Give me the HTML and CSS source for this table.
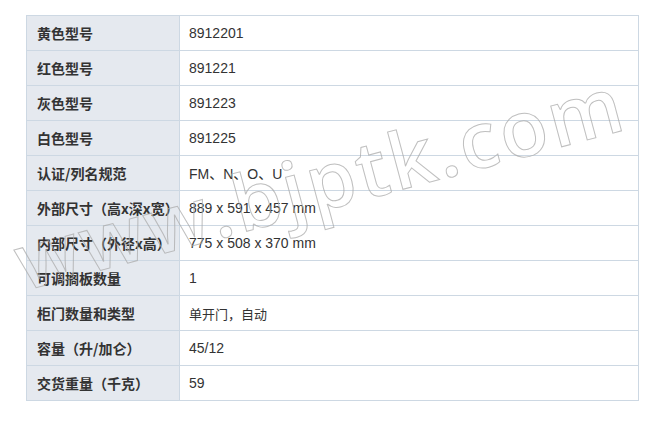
FILE: index.html
```html
<!DOCTYPE html>
<html lang="zh">
<head>
<meta charset="utf-8">
<link rel="stylesheet" href="styles.css">
</head>
<body>
<div class="page">
  <table class="spec">
    <tr><th>黄色型号</th><td>8912201</td></tr>
    <tr><th>红色型号</th><td>891221</td></tr>
    <tr><th>灰色型号</th><td>891223</td></tr>
    <tr><th>白色型号</th><td>891225</td></tr>
    <tr><th>认证/列名规范</th><td>FM、N、O、U</td></tr>
    <tr><th>外部尺寸（高x深x宽）</th><td>889 x 591 x 457 mm</td></tr>
    <tr><th>内部尺寸（外径x高）</th><td>775 x 508 x 370 mm</td></tr>
    <tr><th>可调搁板数量</th><td>1</td></tr>
    <tr><th>柜门数量和类型</th><td class="cjk">单开门，自动</td></tr>
    <tr><th>容量（升/加仑）</th><td>45/12</td></tr>
    <tr><th>交货重量（千克）</th><td>59</td></tr>
  </table>
  <div class="watermark">www.bjptk.com</div>
</div>
</body>
</html>
```

FILE: styles.css
```css
html, body {
  margin: 0;
  padding: 0;
  background: #ffffff;
}
.page {
  position: relative;
  width: 665px;
  height: 429px;
  padding: 15px 0 0 26px;
  box-sizing: border-box;
  overflow: hidden;
}
.spec {
  border-collapse: collapse;
  width: 613px;
  font-family: "Liberation Sans", Arial, "Noto Sans CJK SC", sans-serif;
  font-size: 14px;
  color: #333333;
}
.spec th,
.spec td {
  border: 1px solid #cdd8e3;
  height: 35px;
  padding: 0 0 0 9px;
  text-align: left;
  vertical-align: middle;
  box-sizing: border-box;
}
.spec th {
  width: 153px;
  padding-left: 10px;
  background: #e5e9ef;
  font-family: "Noto Sans CJK SC", sans-serif;
  font-weight: bold;
  font-size: 14px;
  color: #333333;
  white-space: nowrap;
}
.spec td.cjk {
  font-family: "Noto Sans CJK SC", sans-serif;
  font-size: 13px;
}
.watermark {
  position: absolute;
  left: 24px;
  top: 222px;
  font-family: "Open Sans", sans-serif;
  font-weight: 600;
  font-size: 78px;
  line-height: 1;
  letter-spacing: 3px;
  color: transparent;
  -webkit-text-stroke: 1px rgba(170, 170, 170, 0.75);
  transform-origin: 0 69px;
  transform: rotate(-15deg);
  white-space: nowrap;
  pointer-events: none;
}
```
